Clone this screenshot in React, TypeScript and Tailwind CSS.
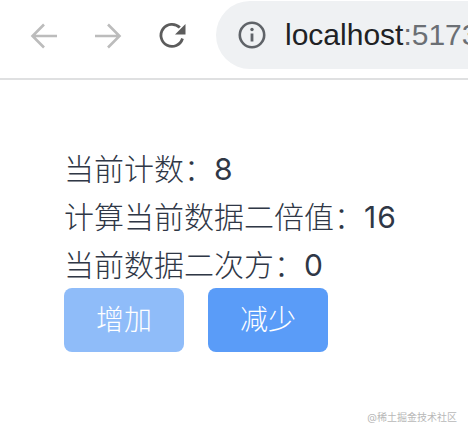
const Toolbar = () => {
  return (
    <div className="h-[80px] border-b-2 border-[#dfe0e1] flex items-center overflow-hidden">
      <svg width="30" height="30" viewBox="0 0 30 30" fill="none" className="ml-[29px] mb-[6px] shrink-0 text-[#bcbcbc]" stroke="currentColor" strokeWidth="2.6">
        <path d="M28 15H4M15 3.5L3.5 15L15 26.5" />
      </svg>
      <svg width="30" height="30" viewBox="0 0 30 30" fill="none" className="ml-[34px] mb-[6px] shrink-0 text-[#bcbcbc]" stroke="currentColor" strokeWidth="2.6">
        <path d="M2 15H26M15 3.5L26.5 15L15 26.5" />
      </svg>
      <svg width="30" height="30" viewBox="0 0 30 30" fill="none" className="ml-[35px] mb-[6px] shrink-0 text-[#5c5c5c]">
        <path d="M24.5 17.5A11 11 0 1 1 21.8 6.6" stroke="currentColor" strokeWidth="2.8" />
        <path d="M27.5 3V13.5H17Z" fill="currentColor" />
      </svg>
      <div className="ml-[28px] h-[68px] mb-[8px] flex-1 min-w-[300px] shrink-0 rounded-l-[34px] bg-[#eff1f3] flex items-center pl-[21px]">
        <svg width="30" height="30" viewBox="0 0 30 30" fill="none" className="shrink-0 text-[#5f6368]">
          <circle cx="15" cy="15" r="12.2" stroke="currentColor" strokeWidth="2.6" />
          <path d="M15 13.5V21.5" stroke="currentColor" strokeWidth="2.8" />
          <circle cx="15" cy="9.5" r="1.7" fill="currentColor" />
        </svg>
        <span className="ml-[18px] text-[30px] leading-none whitespace-nowrap font-['Liberation_Sans',sans-serif] text-[#202124]">
          localhost<span className="text-[#6b6f74]">:5173</span>
        </span>
      </div>
    </div>
  );
};

const App = () => {
  return (
    <div className="relative h-[434px] w-[468px] overflow-hidden bg-white font-['Inter','Noto_Sans_CJK_SC',sans-serif]">
      <Toolbar />
      <div className="pl-[64px] pt-[65px]">
        <div className="text-[30px] leading-[48px] font-light text-[#2f3746]">
          <p>当前计数：<span className="font-normal">8</span></p>
          <p>计算当前数据二倍值：<span className="font-normal tracking-[1px]">16</span></p>
          <p>当前数据二次方：<span className="font-normal">0</span></p>
        </div>
        <div className="flex gap-[24px] mt-[-1px]">
          <button className="w-[120px] h-[64px] rounded-[8px] bg-[#8fbcf9] text-white text-[28px] font-light">增加</button>
          <button className="w-[120px] h-[64px] rounded-[8px] bg-[#5a9cf8] text-white text-[28px] font-light">减少</button>
        </div>
      </div>
      <span className="absolute right-[11px] bottom-[12px] text-[10px] leading-none text-[#b8b8b8]">@稀土掘金技术社区</span>
    </div>
  );
};

export default App;
